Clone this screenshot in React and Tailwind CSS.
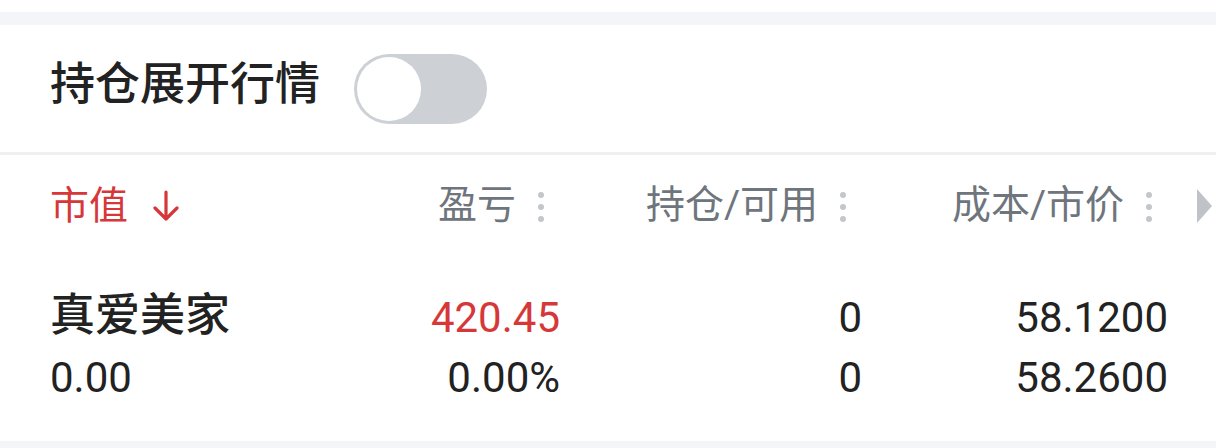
import React, { useState } from "react";

const FONT = { fontFamily: 'Roboto, "Noto Sans CJK SC", sans-serif' };

const COLUMNS = [
  { id: "value", label: "市值", sorted: true },
  { id: "pnl", label: "盈亏" },
  { id: "qty", label: "持仓/可用" },
  { id: "cost", label: "成本/市价" },
];

const ROWS = [
  { name: "真爱美家", value: "0.00", pnl: "420.45", pnlPct: "0.00%", qty: "0", avail: "0", cost: "58.1200", price: "58.2600" },
];

function Dots() {
  return (
    <span className="flex flex-col gap-[6px] ml-[22px]">
      <span className="w-[6px] h-[6px] rounded-full bg-[#c3c6ca]" />
      <span className="w-[6px] h-[6px] rounded-full bg-[#c3c6ca]" />
      <span className="w-[6px] h-[6px] rounded-full bg-[#c3c6ca]" />
    </span>
  );
}

function Toggle({ on, onChange }) {
  return (
    <button
      onClick={() => onChange(!on)}
      className={`w-[133px] h-[70px] rounded-full p-[3px] flex ${on ? "justify-end bg-[#d6383a]" : "justify-start bg-[#cdd0d4]"}`}
    >
      <span className="w-[64px] h-[64px] rounded-full bg-white" />
    </button>
  );
}

export default function App() {
  const [expand, setExpand] = useState(false);

  return (
    <div className="w-[1216px] h-[448px] bg-white overflow-hidden" style={FONT}>
      <div className="h-[12px]" />
      <div className="h-[13px] bg-[#f4f5f9]" />

      {/* Toggle bar */}
      <div className="h-[127px] flex items-center pl-[50px] gap-[34px]">
        <span className="text-[45px] font-medium leading-none text-[#222] pb-[8px]">持仓展开行情</span>
        <Toggle on={expand} onChange={setExpand} />
      </div>
      <div className="h-[3px] bg-[#eeeff1]" />

      {/* Header */}
      <div className="relative h-[104px] pl-[50px] pr-[48px] grid grid-cols-[210px_300px_302px_306px] items-center">
        {COLUMNS.map((c, i) =>
          i === 0 ? (
            <div key={c.id} className="flex items-center text-[39px] text-[#d6383a] pb-[2px]">
              <span className="leading-none">{c.label}</span>
              <svg width="26" height="32" viewBox="0 0 26 32" className="ml-[25px]" fill="none" stroke="#d6383a" strokeWidth="3.2" strokeLinecap="round" strokeLinejoin="round">
                <path d="M13 2v27M2 18l11 11 11-11" />
              </svg>
            </div>
          ) : (
            <div key={c.id} className="flex items-center justify-end pr-[16px] text-[39px] text-[#6f757c]">
              <span className="leading-none pb-[4px]">{c.label}</span>
              <Dots />
            </div>
          )
        )}
        <span className="absolute right-[4px] top-[34px] w-0 h-0 border-y-[17px] border-y-transparent border-l-[15px] border-l-[#bfc3c8]" />
      </div>

      {/* Rows */}
      <div className="pt-[29px] pb-[33px]">
        {ROWS.map((r) => (
          <div key={r.name} className="pl-[50px] pr-[48px]">
            <div className="h-[60px] grid grid-cols-[210px_300px_302px_306px] items-center text-[42px] text-[#222]">
              <span className="text-[45px] font-medium leading-none whitespace-nowrap pb-[6px]">{r.name}</span>
              <span className="text-right text-[#d6383a] leading-none">{r.pnl}</span>
              <span className="text-right leading-none">{r.qty}</span>
              <span className="text-right leading-none">{r.cost}</span>
            </div>
            <div className="h-[60px] grid grid-cols-[210px_300px_302px_306px] items-center text-[42px] text-[#222]">
              <span className="leading-none">{r.value}</span>
              <span className="text-right leading-none">{r.pnlPct}</span>
              <span className="text-right leading-none">{r.avail}</span>
              <span className="text-right leading-none">{r.price}</span>
            </div>
          </div>
        ))}
      </div>
      <div className="h-[7px] bg-[#f4f5f9]" />
    </div>
  );
}
